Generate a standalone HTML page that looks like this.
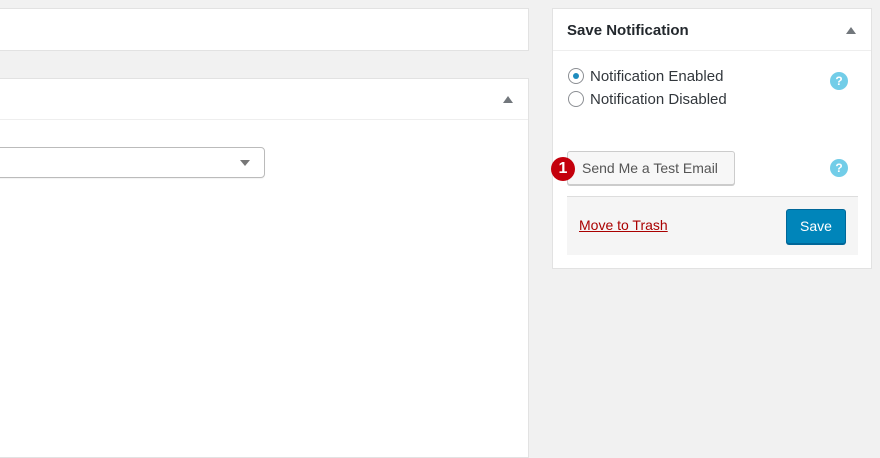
<!DOCTYPE html>
<html><head><style>
body{margin:0;width:880px;height:450px;background:#f1f1f1;position:relative;overflow:hidden;font-family:"Liberation Sans",sans-serif;color:#32373c}
.box{position:absolute;background:#fff;border:1px solid #e2e2e2;box-sizing:border-box}
.abs{position:absolute}
.help{position:absolute;width:18px;height:18px;border-radius:50%;background:#72cde8;color:#fff;font-size:12px;font-weight:bold;text-align:center;line-height:18px}
.radio{position:absolute;width:16px;height:16px;border-radius:50%;border:1px solid #8c8f94;box-sizing:border-box;background:#fff}
</style></head><body>
<div class="box" style="left:-2px;top:8px;width:531px;height:43px"></div>
<div class="box" style="left:-2px;top:78px;width:531px;height:380px"></div>
<div class="abs" style="left:0;top:119px;width:528px;height:1px;background:#eee"></div>
<div class="abs" style="left:503px;top:96px;width:0;height:0;border-left:5px solid transparent;border-right:5px solid transparent;border-bottom:7px solid #72777c"></div>
<div class="abs" style="left:-6px;top:147px;width:271px;height:31px;border:1px solid #bbb;border-radius:4px;box-sizing:border-box;box-shadow:0 1px 1px rgba(0,0,0,.05)"></div>
<div class="abs" style="left:240px;top:160px;width:0;height:0;border-left:5px solid transparent;border-right:5px solid transparent;border-top:6px solid #777"></div>

<div class="box" style="left:552px;top:8px;width:320px;height:261px"></div>
<div class="abs" style="left:553px;top:50px;width:318px;height:1px;background:#eee"></div>
<div class="abs" style="left:567px;top:22px;font-size:15px;font-weight:bold;color:#23282d">Save Notification</div>
<div class="abs" style="left:846px;top:27px;width:0;height:0;border-left:5px solid transparent;border-right:5px solid transparent;border-bottom:7px solid #72777c"></div>
<div class="radio" style="left:568px;top:68px"><div style="position:absolute;left:4px;top:4px;width:6px;height:6px;border-radius:50%;background:#1e8cbe"></div></div>
<div class="abs" style="left:590px;top:68px;font-size:15px">Notification Enabled</div>
<div class="radio" style="left:568px;top:91px"></div>
<div class="abs" style="left:590px;top:91px;font-size:15px">Notification Disabled</div>
<div class="help" style="left:830px;top:72px">?</div>
<div class="abs" style="left:567px;top:151px;width:168px;height:34px;border:1px solid #ccc;border-radius:3px;background:#f7f7f7;box-sizing:border-box;box-shadow:0 1px 0 #ccc;font-size:14px;line-height:32px;padding-left:14px;color:#555">Send Me a Test Email</div>
<div class="abs" style="left:551px;top:157px;width:24px;height:24px;border-radius:50%;background:#c4000c;color:#fff;font-size:16px;font-weight:bold;text-align:center;line-height:24px">1</div>
<div class="help" style="left:830px;top:159px">?</div>
<div class="abs" style="left:567px;top:196px;width:291px;height:58px;background:#f5f5f5;border-top:1px solid #ddd"></div>
<div class="abs" style="left:579px;top:217px;font-size:14px;color:#a00;text-decoration:underline">Move to Trash</div>
<div class="abs" style="left:786px;top:209px;width:60px;height:35px;background:#0085ba;border:1px solid #006799;border-radius:3px;box-sizing:border-box;color:#fff;font-size:14px;text-align:center;line-height:33px;box-shadow:0 1px 0 #006799">Save</div>
</body></html>
